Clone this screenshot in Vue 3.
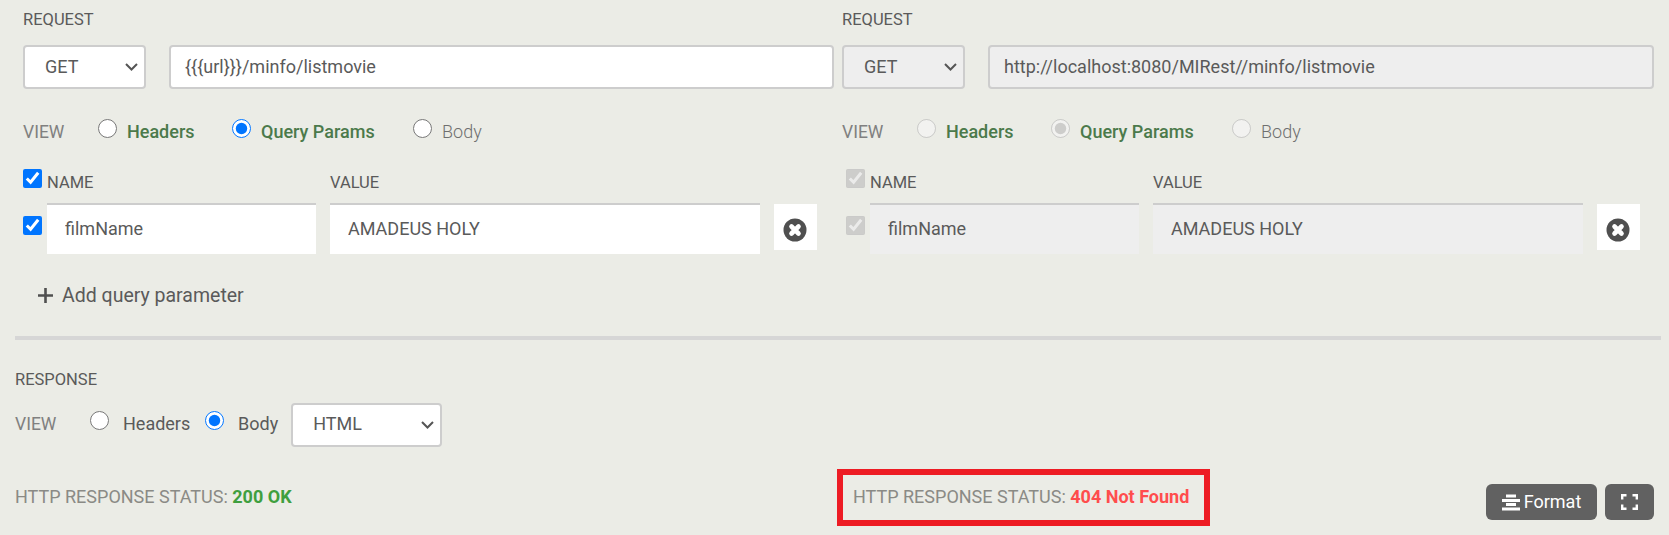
<script setup>
const panels = [
  { key: 'a', disabled: false, url: '{{{url}}}/minfo/listmovie' },
  { key: 'b', disabled: true, url: 'http://localhost:8080/MIRest//minfo/listmovie' },
]
</script>

<template>
  <main class="page">
    <section class="request">
      <div v-for="p in panels" :key="p.key" class="panel" :class="{ off: p.disabled }">
        <div class="label">REQUEST</div>
        <div class="url-row">
          <select class="sel method" :disabled="p.disabled"><option>GET</option></select>
          <input class="url" :disabled="p.disabled" :value="p.url" />
        </div>
        <div class="view-row">
          <span class="view">VIEW</span>
          <label class="radio first"><input type="radio" :name="'v' + p.key" :disabled="p.disabled" /><b>Headers</b></label>
          <label class="radio second"><input type="radio" :name="'v' + p.key" :disabled="p.disabled" checked /><b>Query Params</b></label>
          <label class="radio third"><input type="radio" :name="'v' + p.key" :disabled="p.disabled" /><span class="light">Body</span></label>
        </div>
        <div class="params">
          <div class="head">
            <input type="checkbox" class="chk" :disabled="p.disabled" checked />
            <span class="col-name">NAME</span>
            <span class="col-value">VALUE</span>
          </div>
          <div class="param">
            <input type="checkbox" class="chk" :disabled="p.disabled" checked />
            <input class="cell name" :disabled="p.disabled" value="filmName" />
            <input class="cell value" :disabled="p.disabled" value="AMADEUS HOLY" />
            <button class="del" type="button" aria-label="Remove">
              <svg width="24" height="24" viewBox="0 0 24 24"><circle cx="12" cy="12" r="11.500" fill="#4f4f4f" /><path d="M8.500 8.500 15.500 15.500M15.500 8.500 8.500 15.500" stroke="#fff" stroke-width="4.600" stroke-linecap="round" /></svg>
            </button>
          </div>
        </div>
        <div v-if="!p.disabled" class="add">
          <svg width="15" height="15" viewBox="0 0 15 15"><path d="M7.500 0v15M0 7.500h15" stroke="#505050" stroke-width="2.600" /></svg>
          <span>Add query parameter</span>
        </div>
      </div>
    </section>

    <hr class="divider" />

    <section class="response">
      <div class="label">RESPONSE</div>
      <div class="resp-view">
        <span class="view">VIEW</span>
        <label class="radio r1"><input type="radio" name="resp" /><span>Headers</span></label>
        <label class="radio r2"><input type="radio" name="resp" checked /><span>Body</span></label>
        <select class="sel format-sel"><option>HTML</option></select>
      </div>
      <div class="status-row">
        <div class="status first-status">HTTP RESPONSE STATUS: <b class="ok">200 OK</b></div>
        <div class="status boxed">HTTP RESPONSE STATUS: <b class="bad">404 Not Found</b></div>
        <div class="actions">
          <button class="btn fmt" type="button">
            <svg width="18" height="17" viewBox="0 0 18 17"><path d="M4 2h10M0 6.500h18M4 10.500h10M0 15h18" stroke="#fff" stroke-width="2.800" fill="none" /></svg>
            <span class="fmt-text">Format</span>
          </button>
          <button class="btn full" type="button" aria-label="Fullscreen">
            <svg width="17" height="16" viewBox="0 0 17 16"><path d="M1.200 5.500V1.200h4.300M11.500 1.200h4.300v4.300M15.800 10.500v4.300h-4.300M5.500 14.800H1.200v-4.300" stroke="#fff" stroke-width="2.400" fill="none" /></svg>
          </button>
        </div>
      </div>
    </section>
  </main>
</template>

<style>
html, body { margin: 0; background: #ebece6; }
</style>

<style scoped>
.page {
  width: 1669px;
  height: 535px;
  overflow: hidden;
  background: #ebece6;
  color: #5a5a5a;
  font-family: Roboto, sans-serif;
  font-size: 18px;
}
.request { display: flex; }
.panel { width: 819px; margin-left: 23px; flex: none; }
.panel.off { width: 812px; margin-left: 0; }
.label { font-size: 16.500px; line-height: 20px; color: #5a5a5a; }
.panel .label { padding-top: 10px; }
.url-row { display: flex; margin-top: 15px; }
.sel, .url, .cell {
  font-family: Roboto, sans-serif;
  font-size: 18px;
  color: #5a5a5a;
  box-sizing: border-box;
  outline: none;
  opacity: 1;
}
.sel {
  appearance: none;
  height: 44px;
  background-color: #fff;
  background-image: url("data:image/svg+xml,%3Csvg xmlns='http://www.w3.org/2000/svg' width='13' height='8' viewBox='0 0 13 8'%3E%3Cpath d='M1 1l5.500 5.500L12 1' fill='none' stroke='%23555' stroke-width='2'/%3E%3C/svg%3E");
  background-repeat: no-repeat;
  background-position: right 6px center;
  border: 2px solid #cdcdcd;
  border-radius: 4px;
  padding: 0 0 2px 20px;
}
.method { width: 123px; }
.url {
  margin-left: 23px;
  width: 665px;
  height: 44px;
  background: #fff;
  border: 2px solid #cdcdcd;
  border-radius: 4px;
  padding: 0 14px 1px;
}
.off .sel, .off .url, .off .cell { background-color: #eee; }
.off .url { width: 666px; }
.view-row { display: flex; height: 30px; margin-top: 28px; line-height: 30px; }
.view { font-size: 17.500px; color: #808080; }
.view-row .view { width: 75px; }
.radio { display: flex; font-size: 18px; }
.radio input { width: 19px; height: 19px; margin: 2px 0 0; flex: none; }
.radio b { font-weight: 500; color: #4b7a4b; margin-left: 10px; }
.radio .light { color: #6f6f6f; font-weight: 300; margin-left: 10px; }
.first { width: 134px; }
.second { width: 181px; }
.params { margin-top: 22px; }
.head { display: flex; height: 34px; font-size: 16.500px; line-height: 22px; }
.chk { width: 19px; height: 19px; margin: 0; flex: none; }
.off .chk { margin-left: 4px; }
.col-name { margin: 3px 0 0 5px; width: 283px; }
.col-value { margin-top: 3px; }
.param { display: flex; }
.param .chk { margin-top: 13px; }
.cell {
  height: 51px;
  background: #fff;
  border: none;
  border-top: 2px solid #cdcdcd;
  padding: 0 18px 2px;
  border-radius: 0;
}
.name { width: 269px; margin-left: 5px; }
.value { width: 430px; margin-left: 14px; }
.del {
  width: 43px;
  height: 46px;
  margin: 1px 0 0 14px;
  border: none;
  background: #fff;
  padding: 6px 1px 0 0;
  display: flex;
  align-items: center;
  justify-content: center;
}
.add {
  display: flex;
  align-items: center;
  margin: 29px 0 29px 15px;
  height: 24px;
  font-size: 19.500px;
  color: #5a5a5a;
}
.add span { margin-left: 9px; }
.divider {
  margin: 0 0 0 15px;
  width: 1646px;
  height: 4px;
  border: none;
  background: #d6d6d6;
}
.response { padding-left: 15px; }
.response .label { padding-top: 30px; }
.resp-view { display: flex; height: 44px; margin-top: 13px; line-height: 42px; }
.resp-view .view { width: 75px; }
.resp-view .radio input { margin-top: 8px; }
.r1 { width: 115px; }
.r1 span, .r2 span { margin-left: 14px; }
.format-sel { width: 151px; margin-left: 13px; padding: 0 0 3px 20px; }
.status-row { display: flex; height: 57px; margin-top: 22px; }
.status { font-size: 18px; color: #8a8a85; white-space: pre; line-height: 56px; }
.first-status { width: 822px; }
.boxed {
  box-sizing: border-box;
  width: 373px;
  height: 57px;
  border: 6px solid #ed1c24;
  padding-left: 10px;
  line-height: 44px;
}
.ok { color: #3f9f3f; font-weight: 700; }
.bad { color: #ff4d4d; font-weight: 700; }
.actions { display: flex; gap: 8px; margin: 15px 0 0 276px; }
.btn {
  height: 36px;
  background: #616161;
  border: none;
  border-radius: 6px;
  color: #fff;
  font: 400 18px Roboto, sans-serif;
  display: flex;
  align-items: center;
  justify-content: center;
  padding: 0;
}
.fmt { width: 111px; gap: 4px; }
.fmt-text { margin-top: -2px; }
.full { width: 49px; }
</style>
